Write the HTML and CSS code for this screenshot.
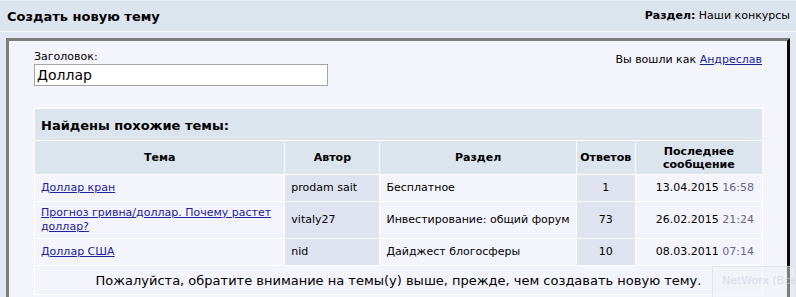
FILE: index.html
```html
<!DOCTYPE html>
<html>
<head>
<meta charset="utf-8">
<link rel="stylesheet" href="styles.css">
</head>
<body>
<div class="topbar">
  <div class="title">Создать новую тему</div>
  <div class="section"><b>Раздел:</b> Наши конкурсы</div>
</div>
<div class="box">
  <div class="formrow">
    <div class="field">
      <label class="lbl">Заголовок:</label>
      <input class="inp" type="text" value="Доллар">
    </div>
    <div class="login">Вы вошли как <a href="#">Андреслав</a></div>
  </div>
  <table class="sim">
    <colgroup>
      <col class="c1"><col class="c2"><col class="c3"><col class="c4"><col class="c5">
    </colgroup>
    <tr><td class="cap" colspan="5">Найдены похожие темы:</td></tr>
    <tr class="head">
      <th>Тема</th>
      <th>Автор</th>
      <th>Раздел</th>
      <th>Ответов</th>
      <th>Последнее<br>сообщение</th>
    </tr>
    <tr>
      <td class="a1"><a href="#">Доллар кран</a></td>
      <td class="a2">prodam sait</td>
      <td class="a1">Бесплатное</td>
      <td class="a2 num">1</td>
      <td class="a1 date">13.04.2015 <span class="time">16:58</span></td>
    </tr>
    <tr class="tall">
      <td class="a1"><a href="#">Прогноз гривна/доллар. Почему растет доллар?</a></td>
      <td class="a2">vitaly27</td>
      <td class="a1">Инвестирование: общий форум</td>
      <td class="a2 num">73</td>
      <td class="a1 date">26.02.2015 <span class="time">21:24</span></td>
    </tr>
    <tr>
      <td class="a1"><a href="#">Доллар США</a></td>
      <td class="a2">nid</td>
      <td class="a1">Дайджест блогосферы</td>
      <td class="a2 num">10</td>
      <td class="a1 date">08.03.2011 <span class="time">07:14</span></td>
    </tr>
    <tr><td class="note" colspan="5">Пожалуйста, обратите внимание на темы(у) выше, прежде, чем создавать новую тему.</td></tr>
  </table>
</div>
<div class="popup">NetWorx (Все</div>
</body>
</html>
```
FILE: styles.css
```css
html, body {
  margin: 0;
  padding: 0;
}
body {
  background: #e3e7f1;
  font-family: "DejaVu Sans", Verdana, sans-serif;
  font-size: 11px;
  color: #000;
  overflow: hidden;
  height: 297px;
  position: relative;
}
.topbar {
  height: 30px;
  background: #dce4ed;
  border-top: 1px solid #e9eef4;
  border-bottom: 1px solid #f6f8fb;
  display: flex;
  align-items: center;
  justify-content: space-between;
  padding: 0 7px 0 7px;
}
.title {
  font-weight: bold;
  font-size: 13px;
  margin-top: 1px;
}
.section {
  font-size: 11px;
  margin-top: -2px;
  margin-right: -1px;
}
.box {
  margin: 6px 6px 0 6px;
  background: #f4f4fd;
  border-top: 3px solid #7e7e7e;
  border-left: 3px solid #7e7e7e;
  border-right: 3px solid #0a0a0a;
  border-bottom: 3px solid #0a0a0a;
  padding: 9px 25px 20px 25px;
  height: 300px;
}
.formrow {
  display: flex;
  justify-content: space-between;
  align-items: flex-start;
}
.field {
  display: flex;
  flex-direction: column;
}
.lbl {
  font-size: 11px;
  line-height: 13px;
  margin-bottom: 1px;
}
.inp {
  width: 288px;
  height: 20px;
  box-sizing: content-box;
  margin: 0;
  padding: 0 2px;
  border: 1px solid #a5a5a5;
  background: #fff;
  font-family: "DejaVu Sans", Verdana, sans-serif;
  font-size: 14px;
  color: #000;
  outline: none;
}
.login {
  font-size: 11px;
  margin-top: 3px;
}
a {
  color: #22229c;
  text-decoration: underline;
}
.sim {
  margin-top: 22px;
  width: 729px;
  border-collapse: separate;
  border-spacing: 1px;
  background: #ffffff;
  table-layout: fixed;
}
.sim td, .sim th {
  padding: 0 6px;
  font-size: 11px;
}
.c1 { width: 249px; }
.c2 { width: 94px; }
.c3 { width: 195px; }
.c4 { width: 58px; }
.c5 { width: 126px; }
.cap {
  background: #dce4ed;
  font-weight: bold;
  font-size: 13px !important;
  height: 30px;
  padding-top: 1px !important;
}
.head th {
  background: #dce4ed;
  height: 33px;
  font-weight: bold;
  line-height: 13px;
  text-align: center;
  padding: 0 2px;
}
.sim tr td.a1, .sim tr td.a2 {
  height: 26px;
  line-height: 14px;
}
.sim tr.tall td {
  height: 36px;
}
.a1 { background: #f4f4fd; }
.a2 { background: #dfe3ef; }
.num { text-align: center; }
.sim td.date { text-align: right; padding-right: 8px; }
.time { color: #666686; }
.note {
  background: #f4f4fd;
  text-align: center;
  font-size: 13px !important;
  height: 28px;
}
.popup {
  position: absolute;
  left: 712px;
  top: 266px;
  width: 84px;
  height: 40px;
  background: rgba(240, 240, 246, 0.5);
  border: 1px solid rgba(215, 215, 225, 0.6);
  color: rgba(200, 204, 218, 0.6);
  font-family: "DejaVu Sans", sans-serif;
  font-size: 11px;
  padding: 7px 0 0 9px;
  box-sizing: border-box;
  white-space: nowrap;
  overflow: hidden;
}
```
